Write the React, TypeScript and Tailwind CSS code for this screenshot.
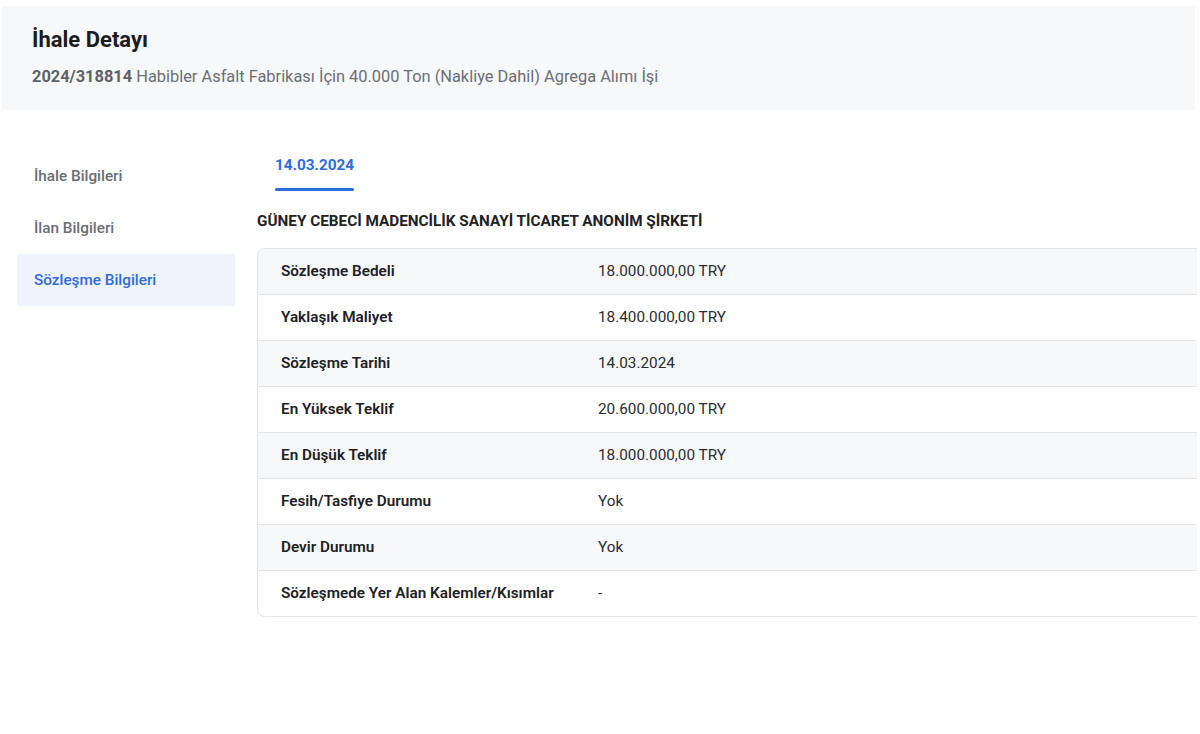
import React from 'react';

const rows: [string, string][] = [
  ['Sözleşme Bedeli', '18.000.000,00 TRY'],
  ['Yaklaşık Maliyet', '18.400.000,00 TRY'],
  ['Sözleşme Tarihi', '14.03.2024'],
  ['En Yüksek Teklif', '20.600.000,00 TRY'],
  ['En Düşük Teklif', '18.000.000,00 TRY'],
  ['Fesih/Tasfiye Durumu', 'Yok'],
  ['Devir Durumu', 'Yok'],
  ['Sözleşmede Yer Alan Kalemler/Kısımlar', '-'],
];

const menu = ['İhale Bilgileri', 'İlan Bilgileri', 'Sözleşme Bilgileri'];

const App: React.FC = () => {
  return (
    <div className="w-[1200px] h-[734px] bg-white overflow-hidden font-['Roboto',sans-serif] pt-[6px]">
      {/* Header */}
      <div className="ml-[2px] w-[1193px] h-[104px] bg-[#f7f8fa] pl-[30px] pt-[22px]">
        <h1 className="text-[22px] leading-[24px] font-bold text-[#1c1c1c]">İhale Detayı</h1>
        <p className="mt-[15px] text-[16.4px] leading-[20px] text-[#6b6f76]">
          <span className="font-bold text-[#5d6168]">2024/318814</span> Habibler Asfalt Fabrikası İçin 40.000 Ton (Nakliye Dahil) Agrega Alımı İşi
        </p>
      </div>

      <div className="flex mt-[40px]">
        {/* Sidebar */}
        <div className="ml-[17px] w-[218px] flex flex-col">
          {menu.map((m, i) => (
            <div
              key={m}
              className={
                i === 2
                  ? 'h-[52px] flex items-center pl-[17px] text-[15.3px] font-medium text-[#2f6bdb] bg-[#eef3fc]'
                  : 'h-[52px] flex items-center pl-[17px] text-[15.3px] font-medium text-[#6a6d72]'
              }
            >
              {m}
            </div>
          ))}
        </div>

        {/* Main */}
        <div className="ml-[22px] w-[940px]">
          <div className="ml-[18px] inline-flex flex-col">
            <span className="mt-[5px] h-[20px] leading-[20px] text-[15.3px] font-bold text-[#2f6bdb]">14.03.2024</span>
            <span className="mt-[13px] h-[3px] rounded-full bg-[#2f6bdb]"></span>
          </div>
          <div className="mt-[20px] h-[20px] leading-[20px] text-[15.3px] font-bold text-[#222]">
            GÜNEY CEBECİ MADENCİLİK SANAYİ TİCARET ANONİM ŞİRKETİ
          </div>
          <div className="mt-[17px] border border-r-0 border-[#e3e5e8] rounded-l-[8px] overflow-hidden">
            {rows.map(([k, v], i) => (
              <div
                key={k}
                className={
                  (i % 2 === 0 ? 'bg-[#f7f8fa] ' : 'bg-white ') +
                  (i > 0 ? 'border-t border-[#e3e5e8] h-[46px] ' : 'h-[45px] ') +
                  'flex items-center text-[15.3px]'
                }
              >
                <div className="pl-[23px] w-[340px] font-semibold text-[#202124]">{k}</div>
                <div className="text-[#2b2d31]">{v}</div>
              </div>
            ))}
          </div>
        </div>
      </div>
    </div>
  );
};

export default App;
